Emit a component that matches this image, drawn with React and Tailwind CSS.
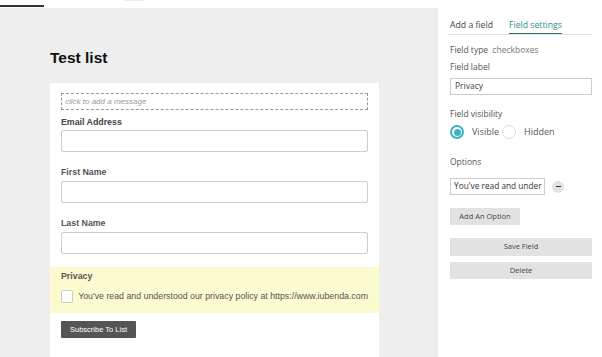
export default function App() {
  const sans = { fontFamily: '"Liberation Sans", Arial, sans-serif' };
  const open = { fontFamily: '"Open Sans", "Noto Sans", sans-serif' };
  return (
    <div className="w-[602px] h-[357px] overflow-hidden flex flex-col bg-white">
      <div className="h-[8px] flex shrink-0 bg-white">
        <div className="w-[44px] h-[2px] mt-[5px] bg-[#333333]" />
        <div className="w-[20px] h-[1px] ml-[80px] bg-[#ececec]" />
      </div>
      <div className="flex flex-1 min-h-0">
        <div className="w-[438px] shrink-0 bg-[#eeeeee] pl-[50px]" style={sans}>
          <h1 className="mt-[40px] h-[20px] leading-[20px] text-[15.5px] font-bold text-[#111]">Test list</h1>
          <div className="mt-[15px] w-[329px] h-[300px] bg-white pt-[10px]">
            <div className="mx-[11px] h-[17px] border border-dashed border-[#999] flex items-center px-[3px] text-[8px] italic text-[#999]">click to add a message</div>
            <div className="px-[11px]">
              <div className="mt-[6px] text-[8.8px] leading-[12px] font-bold text-[#444]">Email Address</div>
              <div className="mt-[2px] h-[22px] border border-[#cccccc] rounded-[2px]" />
              <div className="mt-[14px] text-[8.8px] leading-[12px] font-bold text-[#555]">First Name</div>
              <div className="mt-[3px] h-[22px] border border-[#cccccc] rounded-[2px]" />
              <div className="mt-[14px] text-[8.8px] leading-[12px] font-bold text-[#555]">Last Name</div>
              <div className="mt-[3px] h-[22px] border border-[#cccccc] rounded-[2px]" />
            </div>
            <div className="mt-[13px] h-[46px] bg-[#fcfbcf] px-[11px] pt-[3px]">
              <div className="text-[8.8px] leading-[12px] font-bold text-[#555]">Privacy</div>
              <div className="mt-[8px] flex items-center">
                <div className="w-[13px] h-[13px] bg-white border border-[#cccccc] rounded-[2px]" />
                <span className="ml-[5px] whitespace-nowrap text-[8.8px] text-[#555]">You've read and understood our privacy policy at https://www.iubenda.com</span>
              </div>
            </div>
            <div className="mt-[8px] ml-[11px] w-[75px] h-[17px] bg-[#555555] rounded-[1px] flex items-center justify-center text-[7.5px] text-white">Subscribe To List</div>
          </div>
        </div>
        <div className="flex-1 bg-white pl-[12px] pr-[10px]" style={open}>
          <div className="mt-[11px] flex border-b border-[#e4e4e4] -ml-[2px] pl-[2px] text-[8.7px] leading-[12px]">
            <div className="pb-[3px] text-[#444]">Add a field</div>
            <div className="ml-[16px] pb-[2px] text-[#2b8f8f] border-b border-[#2b6f6f]">Field settings</div>
          </div>
          <div className="mt-[9px] text-[8.5px] leading-[12px] text-[#555]">Field type <span className="ml-[2px] text-[#777]">checkboxes</span></div>
          <div className="mt-[5px] text-[8.5px] leading-[12px] text-[#555]">Field label</div>
          <div className="mt-[5px] h-[17px] border border-[#cccccc] flex items-center px-[4px] text-[8.5px] text-[#444]">Privacy</div>
          <div className="mt-[13px] text-[8.5px] leading-[12px] text-[#555]">Field visibility</div>
          <div className="mt-[5px] flex items-center text-[9px] text-[#555]">
            <div className="w-[14px] h-[14px] rounded-full border-2 border-[#3ab3c8] flex items-center justify-center">
              <div className="w-[7px] h-[7px] rounded-full bg-[#3ab3c8]" />
            </div>
            <span className="ml-[8px]">Visible</span>
            <div className="ml-[3px] w-[14px] h-[14px] rounded-full border border-[#dddddd]" />
            <span className="ml-[8px]">Hidden</span>
          </div>
          <div className="mt-[17px] text-[8.5px] leading-[12px] text-[#555]">Options</div>
          <div className="mt-[10px] flex items-center">
            <div className="w-[95px] h-[17px] border border-[#cccccc] flex items-center px-[3px] text-[8.3px] text-[#333] overflow-hidden whitespace-nowrap">You've read and under</div>
            <div className="ml-[7px] w-[12px] h-[12px] rounded-full bg-[#e2e2e2] flex items-center justify-center">
              <div className="w-[5px] h-[1.5px] bg-[#333]" />
            </div>
          </div>
          <div className="mt-[13px] w-[70px] h-[17px] bg-[#e2e2e2] flex items-center justify-center text-[7.5px] text-[#444]">Add An Option</div>
          <div className="mt-[13px] h-[18px] bg-[#e2e2e2] flex items-center justify-center text-[7.5px] text-[#444]">Save Field</div>
          <div className="mt-[6px] h-[17px] bg-[#e2e2e2] flex items-center justify-center text-[7.5px] text-[#444]">Delete</div>
        </div>
      </div>
    </div>
  );
}
